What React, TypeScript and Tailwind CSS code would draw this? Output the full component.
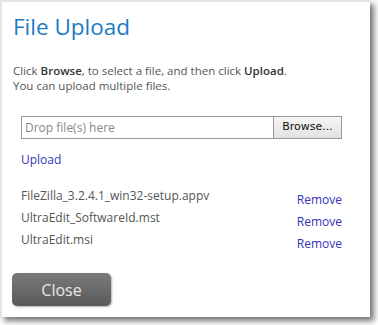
import React from "react";

export default function App() {
  const files = [
    "FileZilla_3.2.4.1_win32-setup.appv",
    "UltraEdit_SoftwareId.mst",
    "UltraEdit.msi",
  ];
  return (
    <div className="w-[378px] h-[325px] bg-white relative" style={{ fontFamily: '"Open Sans", sans-serif' }}>
      <div className="w-[370px] h-[317px] bg-white border-t-2 border-l-2 border-[#e4e4e4] shadow-[4px_4px_6px_rgba(0,0,0,0.55)] flex flex-col">
        <h1 className="ml-[11px] mt-[9px] text-[22.5px] leading-[32px] text-[#1b7bc4]">File Upload</h1>
        <div className="ml-[11px] mt-[20px] text-[11.5px] leading-[15px] text-[#555]">
          <p>
            Click <b className="font-semibold text-[#333]">Browse</b>, to select a file, and then click <b className="font-semibold text-[#333]">Upload</b>.
          </p>
          <p>You can upload multiple files.</p>
        </div>
        <div className="ml-[19px] mt-[23px] flex w-[321px] h-[23px] border border-[#999]">
          <div className="flex-1 flex items-center pl-[3px] text-[12px] text-[#888]">Drop file(s) here</div>
          <div className="w-[68px] border-l border-[#999] bg-gradient-to-b from-[#f6f6f6] to-[#e2e2e2] flex items-center justify-center text-[11px] text-[#111]" style={{ fontFamily: '"DejaVu Sans", sans-serif' }}>
            Browse...
          </div>
        </div>
        <a className="ml-[19px] mt-[12px] text-[12px] text-[#3333bb] w-fit">Upload</a>
        <div className="mt-[20px] ml-[19px] w-[321px] flex flex-col gap-[4px]">
          {files.map((f) => (
            <div key={f} className="flex justify-between h-[18px]">
              <span className="text-[12px] leading-[14px] text-[#555]">{f}</span>
              <span className="text-[12px] leading-[14px] mt-[4px] text-[#3333bb]">Remove</span>
            </div>
          ))}
        </div>
        <button className="ml-[10px] mt-[22px] w-[99px] h-[33px] rounded-[5px] bg-gradient-to-b from-[#7a7a7a] to-[#5a5a5a] text-[#e8e8e8] text-[16px] shadow-[1px_1px_2px_rgba(0,0,0,0.3)]">
          Close
        </button>
      </div>
    </div>
  );
}
